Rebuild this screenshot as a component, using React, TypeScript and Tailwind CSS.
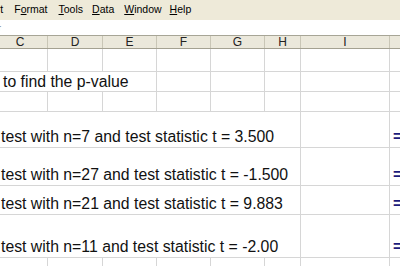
import React from "react";

const font = { fontFamily: '"Liberation Sans", Arial, sans-serif' };

const cols = [
  { k: "C", w: 55 },
  { k: "D", w: 55 },
  { k: "E", w: 54 },
  { k: "F", w: 54 },
  { k: "G", w: 54 },
  { k: "H", w: 36 },
  { k: "I", w: 89 },
];

function GridRow({ h }: { h: string }) {
  return (
    <div className={`flex shrink-0 border-b border-[#d6d6d6] -ml-[7px] ${h}`}>
      {cols.map((c) => (
        <div key={c.k} className="shrink-0 border-r border-[#d6d6d6] h-full" style={{ width: c.w }} />
      ))}
      <div className="flex-1" />
    </div>
  );
}

function TextRow({ h, text, eq }: { h: string; text: string; eq?: boolean }) {
  return (
    <div className={`flex shrink-0 border-b border-[#d6d6d6] -ml-[7px] ${h}`}>
      <div className="w-[308px] shrink-0 border-r border-[#d6d6d6] h-full flex items-end pl-[8px] pb-[1px]">
        <span className="text-[15.8px] leading-[18px] text-[#111] whitespace-nowrap">{text}</span>
      </div>
      <div className="w-[89px] shrink-0 border-r border-[#d6d6d6] h-full" />
      <div className="flex-1 h-full flex items-end pb-[1px] pl-[3px]">
        {eq && <span className="text-[16px] leading-[18px] font-bold text-[#1c1c7c]">=</span>}
      </div>
    </div>
  );
}

export default function App() {
  return (
    <div className="w-[400px] h-[266px] overflow-hidden bg-white flex flex-col" style={font}>
      {/* Menu bar */}
      <div className="h-[20px] shrink-0 bg-[#eeead9] flex items-center text-[10.5px] text-black whitespace-nowrap">
        <span className="-ml-[23px]">Insert</span>
        <span className="ml-[11px]">F<u>o</u>rmat</span>
        <span className="ml-[11px]"><u>T</u>ools</span>
        <span className="ml-[9px]"><u>D</u>ata</span>
        <span className="ml-[10px]"><u>W</u>indow</span>
        <span className="ml-[8px]"><u>H</u>elp</span>
      </div>
      {/* Formula bar */}
      <div className="h-[16px] shrink-0 bg-white border-b border-[#a7a596] flex items-center">
        <span className="text-[9px] text-[#777] -ml-[2px] mt-[2px]">r</span>
      </div>
      {/* Column headers */}
      <div className="h-[13px] shrink-0 bg-[#ebe8db] border-b border-[#a4a191] flex -ml-[7px]">
        {cols.map((c) => (
          <div
            key={c.k}
            className="shrink-0 border-r border-[#c9c6b6] h-full flex items-center justify-center text-[12px] leading-[12px] text-[#222]"
            style={{ width: c.w }}
          >
            {c.k}
          </div>
        ))}
        <div className="flex-1" />
      </div>
      <GridRow h="h-[23px]" />
      {/* row with "to find the p-value" */}
      <div className="flex shrink-0 border-b border-[#d6d6d6] -ml-[7px] h-[20px]">
        <div className="w-[164px] shrink-0 border-r border-[#d6d6d6] h-full flex items-end pl-[10px] pb-[0px]">
          <span className="text-[15.8px] leading-[18px] text-[#111] whitespace-nowrap">to find the p-value</span>
        </div>
        {cols.slice(3).map((c) => (
          <div key={c.k} className="shrink-0 border-r border-[#d6d6d6] h-full" style={{ width: c.w }} />
        ))}
        <div className="flex-1" />
      </div>
      <GridRow h="h-[20px]" />
      <TextRow h="h-[36px]" text="test with n=7 and test statistic t = 3.500" eq />
      <TextRow h="h-[38px]" text="test with n=27 and test statistic t = -1.500" eq />
      <TextRow h="h-[29px]" text="test with n=21 and test statistic t = 9.883" eq />
      <TextRow h="h-[43px]" text="test with n=11 and test statistic t = -2.00" eq />
      <GridRow h="h-[20px]" />
    </div>
  );
}
